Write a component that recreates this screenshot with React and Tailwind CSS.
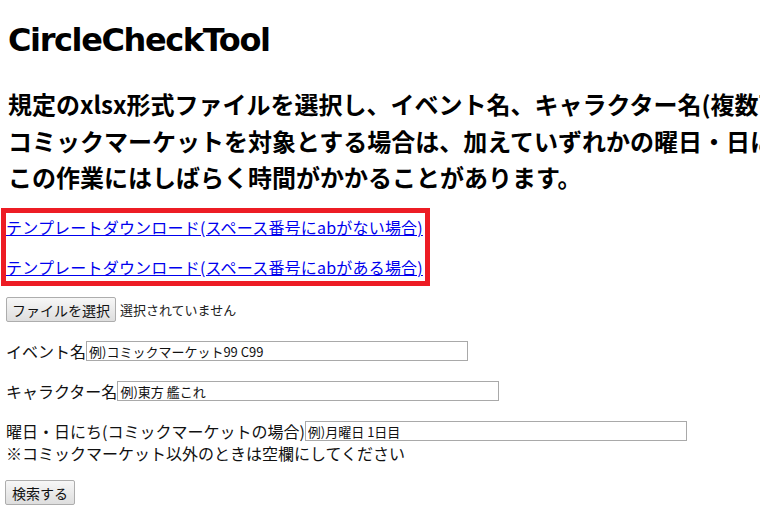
import { useState } from 'react'

const jp = 'font-["Noto_Sans_CJK_JP","Noto_Sans",sans-serif]'

function Field({ label, value, width = 'w-[382px]' }) {
  const [text, setText] = useState(value)
  return (
    <div className="flex items-center h-6">
      <span className="text-base leading-6 text-[#111] whitespace-nowrap">{label}</span>
      <input
        value={text}
        onChange={e => setText(e.target.value)}
        className={`${width} h-5 border border-[#a9a9a9] px-0.5 text-[13px] leading-4 text-[#111] outline-none`}
      />
    </div>
  )
}

export default function App() {
  return (
    <div className={`${jp} w-[760px] h-[526px] overflow-hidden bg-white text-black`}>
      <div className="px-2">
        {/* Title */}
        <h1 className='pt-4 text-[32px] leading-[48px] font-bold font-["DejaVu_Sans","Noto_Sans_CJK_JP",sans-serif] tracking-[-1.4px]'>
          CircleCheckTool
        </h1>

        {/* Description (the long lines run past the window, as in the original) */}
        <div className="mt-[22px] text-2xl leading-[36.5px] font-bold whitespace-nowrap">
          <p>規定のxlsx形式ファイルを選択し、イベント名、キャラクター名(複数可)を入力してください。</p>
          <p>コミックマーケットを対象とする場合は、加えていずれかの曜日・日にちを入力してください。</p>
          <p>この作業にはしばらく時間がかかることがあります。</p>
        </div>
      </div>

      {/* Template links */}
      <div className="mt-[12.5px] ml-px w-[429px] border-[5px] border-[#ed1c24] py-0.5 flex flex-col gap-4">
        <a href="#" className="text-base leading-6 text-[#0000ee] underline whitespace-nowrap tracking-[0.2px]">
          テンプレートダウンロード(スペース番号にabがない場合)
        </a>
        <a href="#" className="text-base leading-6 text-[#0000ee] underline whitespace-nowrap tracking-[0.2px]">
          テンプレートダウンロード(スペース番号にabがある場合)
        </a>
      </div>

      <div className="px-1.5">
        {/* File picker */}
        <div className="mt-[11px] flex items-center gap-1">
          <button className="h-[25px] px-[5px] border border-[#adadad] rounded-[2px] bg-gradient-to-b from-[#f7f7f7] to-[#dedede] text-sm text-[#111]">
            ファイルを選択
          </button>
          <span className="text-[13px] text-[#222]">選択されていません</span>
        </div>

        {/* Form */}
        <div className="mt-[17px] flex flex-col gap-4">
          <Field label="イベント名" value="例)コミックマーケット99 C99" />
          <Field label="キャラクター名" value="例)東方 艦これ" />
          <div>
            <Field label="曜日・日にち(コミックマーケットの場合)" value="例)月曜日 1日目" />
            <p className="text-base leading-5 text-[#111]">※コミックマーケット以外のときは空欄にしてください</p>
          </div>
        </div>

        <button className="mt-[17px] -ml-px h-[25px] px-1.5 border border-[#adadad] rounded-[2px] bg-gradient-to-b from-[#f7f7f7] to-[#dedede] text-sm text-[#111]">
          検索する
        </button>
      </div>
    </div>
  )
}
